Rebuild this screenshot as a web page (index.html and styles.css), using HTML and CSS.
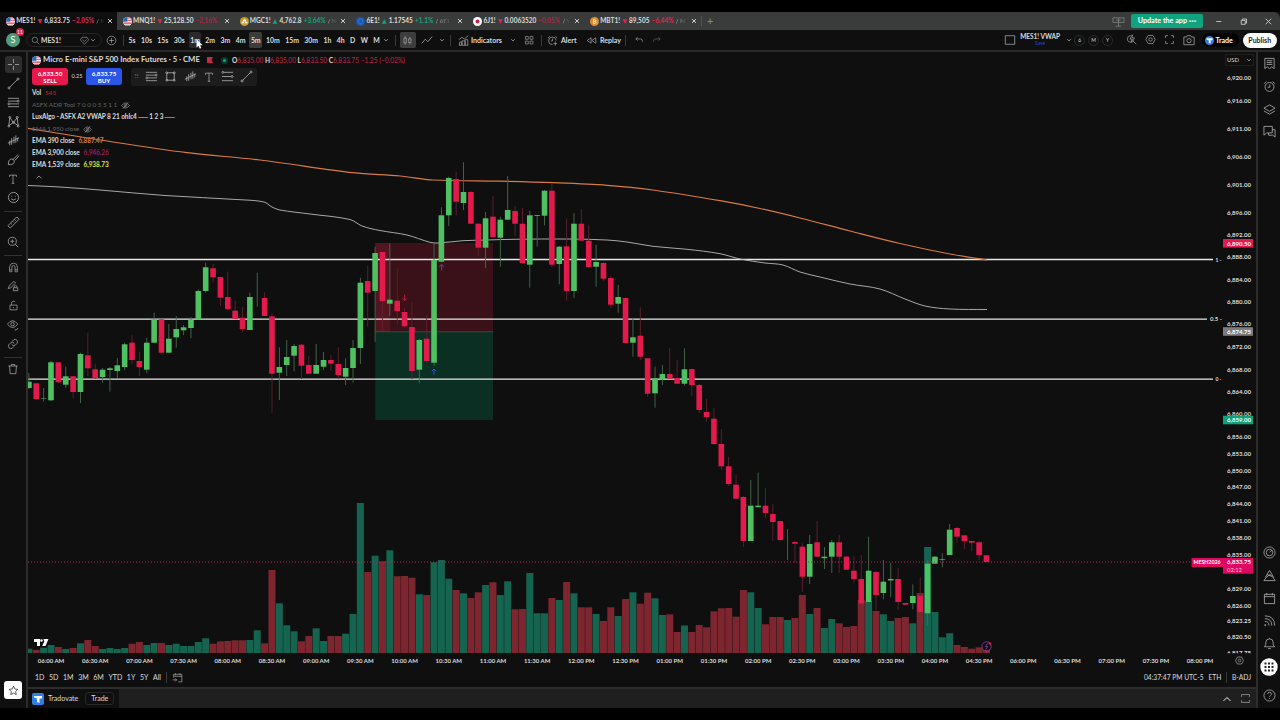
FILE: index.html
```html
<!DOCTYPE html>
<html lang="en">
<head>
  <meta charset="UTF-8">
  <meta name="viewport" content="width=device-width, initial-scale=1.0">
  <title>MES1! 6,833.75</title>
  <link rel="stylesheet" href="styles.css">
</head>
<body>
  <svg class="sprite">
    <symbol id="close" viewBox="0 0 8 8"><path d="M2 2l4 4M6 2L2 6"/></symbol>
    <symbol id="caret" viewBox="0 0 8 8"><path d="M2.2 3.2L4 4.9l1.8-1.7"/></symbol>
    <symbol id="caret-up" viewBox="0 0 8 8"><path d="M1.6 5.2L4 3l2.4 2.2"/></symbol>
    <symbol id="search" viewBox="0 0 14 14"><circle cx="6" cy="6" r="4.2"/><path d="M9 9l4 4"/></symbol>
    <symbol id="plus-circle" viewBox="0 0 14 14"><circle cx="7" cy="7" r="5.5"/><path d="M7 4v6M4 7h6"/></symbol>
    <symbol id="gem" viewBox="0 0 14 14"><path d="M3 2h8l2.500 4-6.500 7-6.500-7zM4 5.500l3 3 3-3"/></symbol>
    <symbol id="candles" viewBox="0 0 14 14"><path d="M2.5 4h3v6h-3zM4 1.5V4M4 10v2.5M8.5 5h3v4.5h-3zM10 2.5V5M10 9.5V12"/></symbol>
    <symbol id="linechart" viewBox="0 0 14 14"><path d="M1 11l4-5 3 3 5-6"/></symbol>
    <symbol id="indicators" viewBox="0 0 14 14"><path d="M1 6l4-3 3 2 5-4M2 13V9h3v4M5 13V7.5h4V13M9 13V6h3.5v7M1 13h12"/></symbol>
    <symbol id="grid" viewBox="0 0 14 14"><path d="M2 2h4v4H2zM8.500 2h4v4h-4zM2 8.500h4v4H2zM8.500 8.500h4v4h-4z"/></symbol>
    <symbol id="clock" viewBox="0 0 14 14"><circle cx="7" cy="7.5" r="4.8"/><path d="M7.3 4.800v3H5M1.200 4l2.400-2.400M12.800 4l-2.400-2.400"/></symbol>
    <symbol id="clock-plus" viewBox="0 0 14 14"><path d="M11.600 7A4.800 4.800 0 1 0 7 12.200M7 4.500v3H5M1 4l2.400-2.400M13 4l-2.400-2.400M10.500 8.500v5M8 11h5"/></symbol>
    <symbol id="replay" viewBox="0 0 14 14"><path d="M6.500 3.500v7L1.500 7zM12.500 3.500v7L7.500 7z"/></symbol>
    <symbol id="undo" viewBox="0 0 14 14"><path d="M5 3L2.500 5.500 5 8M2.500 5.500H9q3 0 3 4"/></symbol>
    <symbol id="redo" viewBox="0 0 14 14"><path d="M9 3l2.500 2.500L9 8M11.500 5.500H5q-3 0-3 4"/></symbol>
    <symbol id="square" viewBox="0 0 14 14"><path d="M1.500 2h11v10h-11z"/></symbol>
    <symbol id="rect" viewBox="0 0 14 14"><path d="M3 3h8v8H3z"/><circle cx="3" cy="3" r="1"/><circle cx="11" cy="3" r="1"/><circle cx="3" cy="11" r="1"/><circle cx="11" cy="11" r="1"/></symbol>
    <symbol id="quick" viewBox="0 0 14 14"><path d="M10 8A4.300 4.300 0 1 1 6 2M9 9l4 4M8 1L5 6.500h3L6.500 10 11 5H8z"/></symbol>
    <symbol id="hex" viewBox="0 0 14 14"><path d="M4 1.800h6L13 7l-3 5.200H4L1 7z"/><circle cx="7" cy="7" r="2.200"/></symbol>
    <symbol id="full" viewBox="0 0 14 14"><path d="M2 5V2h3M9 2h3v3M12 9v3H9M5 12H2V9"/></symbol>
    <symbol id="panel" viewBox="0 0 14 14"><path d="M2 5V2h10v3M12 9v3H2V9"/></symbol>
    <symbol id="camera" viewBox="0 0 14 14"><path d="M1 3.500h3L5 2h4l1 1.500h3v9H1z"/><circle cx="7" cy="7.700" r="2.500"/></symbol>
    <symbol id="cross" viewBox="0 0 14 14"><path d="M7 1v4.500M7 8.500V13M1 7h4.500M8.500 7H13"/></symbol>
    <symbol id="trend" viewBox="0 0 14 14"><path d="M3 11l8-8"/><circle cx="2.200" cy="11.800" r="1.100"/><circle cx="11.800" cy="2.200" r="1.100"/></symbol>
    <symbol id="fib" viewBox="0 0 14 14"><path d="M1 2.500h12M1 5.500h10M3 8.500h10M1 11.500h12"/><circle cx="12" cy="5.500" r="1"/><circle cx="2" cy="8.500" r="1"/></symbol>
    <symbol id="fib-ext" viewBox="0 0 14 14"><path d="M3 2.500h10M1 7h10M1 11.500h12"/><circle cx="2" cy="2.500" r="1"/><circle cx="12" cy="7" r="1"/></symbol>
    <symbol id="pattern" viewBox="0 0 14 14"><path d="M2 11.500L3 3l4 5 4-5 1 8.500M2 11.500L7 8l5 3.500"/><circle cx="3" cy="2.500" r="1"/><circle cx="11" cy="2.500" r="1"/><circle cx="7" cy="8" r="1"/><circle cx="2" cy="12" r="1"/><circle cx="12" cy="12" r="1"/></symbol>
    <symbol id="bars" viewBox="0 0 14 14"><path d="M3 7v5M5 4.500v7M7.500 3v7M9.500 1.500v8M11.500 4v4M1 10l12-6"/></symbol>
    <symbol id="brush" viewBox="0 0 14 14"><path d="M1.500 12.500c0-4 1-6 3.500-6 2.500 0 3.500 2 2.500 4s-3 2-6 2zM7 6.500L12 1.500M8.500 8L13 3"/></symbol>
    <symbol id="text" viewBox="0 0 14 14"><path d="M3 4.500V2.500h8v2M7 2.500v9.500M5.500 12h3"/></symbol>
    <symbol id="smile" viewBox="0 0 14 14"><circle cx="7" cy="7" r="5.500"/><path d="M4.500 8.500q2.500 2.500 5 0M5 5.200v.8M9 5.200v.8"/></symbol>
    <symbol id="ruler" viewBox="0 0 14 14"><path d="M1 10.500L10.500 1 13 3.500 3.500 13zM4 7.700l1.200 1.200M6 5.700l1.200 1.200M8 3.700l1.200 1.200"/></symbol>
    <symbol id="zoom-in" viewBox="0 0 14 14"><circle cx="6.200" cy="6.200" r="4.700"/><path d="M9.600 9.600L13 13M6.200 4v4.400M4 6.200h4.400"/></symbol>
    <symbol id="magnet" viewBox="0 0 14 14"><path d="M2 12.500V6.500a5 5 0 0 1 10 0v6H9v-6a2 2 0 0 0-4 0v6zM2 10h3M9 10h3"/></symbol>
    <symbol id="pencil-lock" viewBox="0 0 14 14"><path d="M1.500 10l1-3L8 1.500l2 2L4.500 9zM7.500 9h5v3.500h-5zM8.500 9V8a1.500 1.500 0 0 1 3 0"/></symbol>
    <symbol id="lock" viewBox="0 0 14 14"><path d="M2.500 6.500h9v6h-9zM4.500 6.500V4a2.500 2.500 0 0 1 4.500-1.500M7 9v1.500"/></symbol>
    <symbol id="eye" viewBox="0 0 14 14"><path d="M.500 6q6-8 12 0-6 8-12 0zM9 12l1.500 1.200L13 10.500"/><circle cx="6.500" cy="6" r="2"/></symbol>
    <symbol id="eye-off" viewBox="0 0 14 14"><path d="M1 7q6-8 12 0-6 8-12 0zM3 12l8-10"/><circle cx="7" cy="7" r="2"/></symbol>
    <symbol id="link" viewBox="0 0 14 14"><path d="M6 4l2-2q2-1 3.500.500T12 6L9.500 8.500Q7 10 5.500 7.500M8 10l-2 2q-2 1-3.500-.500T2 8l2.500-2.500Q7 4 8.500 6.500"/></symbol>
    <symbol id="trash" viewBox="0 0 14 14"><path d="M1.500 3.500h11M5 3.500V1.800h4v1.700M3 3.500l.700 9h6.600l.700-9"/></symbol>
    <symbol id="star" viewBox="0 0 14 14"><path d="M7 1.500l1.700 3.600 3.900.500-2.900 2.700.800 3.900L7 10.300l-3.500 1.900.800-3.900L1.400 5.600l3.900-.500z"/></symbol>
    <symbol id="watch" viewBox="0 0 14 14"><path d="M2 1.500h10v11l-2.500-2-2.500 2-2.500-2-2.500 2zM4 4h6M4 6h6M4 8h6"/></symbol>
    <symbol id="layers" viewBox="0 0 14 14"><path d="M7 2l6 3.500L7 9 1 5.500zM1 8.500L7 12l6-3.500"/></symbol>
    <symbol id="chat" viewBox="0 0 14 14"><path d="M1 1.500h9v7H4l-3 2.500zM10 5h3v8l-2.500-2H6V8.500"/></symbol>
    <symbol id="target" viewBox="0 0 14 14"><circle cx="7" cy="7" r="6"/><circle cx="7" cy="7" r="3.500"/><path d="M7 7l2.500-2.500"/></symbol>
    <symbol id="alien" viewBox="0 0 14 14"><path d="M2.500 9L7 1.500 11.500 9M1 12.500h12l-2.500-4-3-2.500-4 3zM4.500 6l5 2"/></symbol>
    <symbol id="calendar" viewBox="0 0 14 14"><path d="M1.500 2.500h11v10h-11zM1.500 5h11M4 1v2.500M10 1v2.500"/></symbol>
    <symbol id="goto" viewBox="0 0 14 14"><path d="M2 7V3h10.500v9.500H8M2 5.500h10.500M4.500 1.500V4M10 1.500V4M1 10h5M4 8l2 2-2 2"/></symbol>
    <symbol id="feed" viewBox="0 0 14 14"><path d="M2 2q10.500 0 10.500 10.500M2 5q7.500 0 7.500 7.500M2 8q4.500 0 4.500 4.500M2 11.500h1v1H2z"/></symbol>
    <symbol id="bell" viewBox="0 0 14 14"><path d="M1.500 10.500h11L11 8.500V6a4 4 0 0 0-8 0v2.500zM5.500 12.500h3M7 1v1"/></symbol>
    <symbol id="help" viewBox="0 0 14 14"><circle cx="7" cy="7" r="6"/><path d="M5 5.500q0-2 2-2t2 1.800q0 1-1 1.700t-1 1.500M7 9.800v1"/></symbol>
    <symbol id="monitor" viewBox="0 0 14 14"><path d="M1 3h12v5H1zM7 3v9M4 12h6M4.500 5.500h5"/></symbol>
    <symbol id="us" viewBox="0 0 10 10"><circle class="f-white" cx="5" cy="5" r="5"/><path class="f-red" d="M5 .5h2.200l1.500 1.300H5zM5 3h4.600l.3 1.300H5zM.300 6h9.500l-.600 1.400H.900zM2 8.600h6L6.500 9.700h-3z"/><path class="f-blue" d="M5 0v5.300H0A5 5 0 0 1 5 0z"/></symbol>
    <symbol id="gold" viewBox="0 0 10 10"><circle class="f-gold" cx="5" cy="5" r="5"/><path class="f-white" d="M3.800 2.800h2.400l.6 1.800H3.200zM2 5.200h2.300l.5 1.800H1.500zM5.700 5.200H8L8.500 7H5.200z"/></symbol>
    <symbol id="eu" viewBox="0 0 10 10"><circle class="f-eu" cx="5" cy="5" r="5"/><circle class="eu-ring" cx="5" cy="5" r="2.700"/></symbol>
    <symbol id="jp" viewBox="0 0 10 10"><circle class="f-white" cx="5" cy="5" r="5"/><circle class="f-jp" cx="5" cy="5" r="2.100"/></symbol>
    <symbol id="btc" viewBox="0 0 10 10"><circle class="f-btc" cx="5" cy="5" r="5"/><path class="btc-b" d="M4 2.800v4.400h1.500q1.200 0 1.200-1.200T5.500 4.900H4h1.300q1.100 0 1.100-1T5.300 2.800zM4.700 2v.8M4.700 7.200V8"/></symbol>
    <symbol id="tdv" viewBox="0 0 12 12"><path class="f-white" d="M2 3h8v2.500H7.500V10L5 9V5.500L2 4.500z"/></symbol>
  </svg>

  <div class="app">
    <header class="tabs">
      <div class="tab active"><svg class="flag"><use href="#us"/></svg><b>MES1!</b><i class="down">▼</i><span>6,833.75</span><span class="down">−2.05%</span><span class="rest">/ N</span><svg class="x"><use href="#close"/></svg></div>
      <div class="tab"><svg class="flag"><use href="#us"/></svg><b>MNQ1!</b><i class="down">▼</i><span>25,128.50</span><span class="down dim">−2.16%</span><span class="rest"></span><svg class="x"><use href="#close"/></svg></div>
      <div class="tab"><svg class="flag"><use href="#gold"/></svg><b>MGC1!</b><i class="up">▲</i><span>4,762.8</span><span class="up">+3.64%</span><span class="rest">/ N</span><svg class="x"><use href="#close"/></svg></div>
      <div class="tab"><svg class="flag"><use href="#eu"/></svg><b>6E1!</b><i class="up">▲</i><span>1.17545</span><span class="up">+1.1%</span><span class="rest">/ 6E1</span><svg class="x"><use href="#close"/></svg></div>
      <div class="tab"><svg class="flag"><use href="#jp"/></svg><b>6J1!</b><i class="down">▼</i><span>0.0063520</span><span class="down dim">−0.05%</span><span class="rest">/ \</span><svg class="x"><use href="#close"/></svg></div>
      <div class="tab"><svg class="flag"><use href="#btc"/></svg><b>MBT1!</b><i class="down">▼</i><span>89,505</span><span class="down">−6.44%</span><span class="rest">/ M</span><svg class="x"><use href="#close"/></svg></div>
      <div class="tab-add">+</div>
      <div class="window-side">
        <svg class="ico grey"><use href="#monitor"/></svg>
        <button class="update">Update the app <span>◦◦◦</span></button>
        <svg class="win" viewBox="0 0 8 8"><path d="M2 4h4.500"/></svg>
        <svg class="win" viewBox="0 0 8 8"><path d="M2 3h3.500v3.500H2zM3 3V1.800h3.700V5.500h-1"/></svg>
        <svg class="win" viewBox="0 0 8 8"><path d="M1.500 1.500l5 5M6.500 1.500l-5 5"/></svg>
      </div>
    </header>

    <nav class="toolbar">
      <div class="avatar">S<span class="badge">11</span></div>
      <div class="symbol-search"><svg class="ico s9"><use href="#search"/></svg><b>MES1!</b><svg class="ico s9 gem"><use href="#gem"/></svg><svg class="caret"><use href="#caret"/></svg></div>
      <svg class="ico s11 add"><use href="#plus-circle"/></svg>
      <span class="sep"></span>
      <div class="intervals">
        <span>5s</span><span>10s</span><span>15s</span><span>30s</span><span class="hover">1m</span><span>2m</span><span>3m</span><span>4m</span><span class="on">5m</span><span>10m</span><span>15m</span><span>30m</span><span>1h</span><span>4h</span><span>D</span><span>W</span><span>M</span>
      </div>
      <svg class="caret"><use href="#caret"/></svg>
      <span class="sep"></span>
      <div class="style-btn"><svg class="ico s11"><use href="#candles"/></svg></div>
      <svg class="ico s12 line-ico"><use href="#linechart"/></svg>
      <svg class="caret"><use href="#caret"/></svg>
      <span class="sep"></span>
      <svg class="ico s11 ind-ico"><use href="#indicators"/></svg><b class="ind">Indicators</b>
      <svg class="caret"><use href="#caret"/></svg>
      <svg class="ico s10 grid-ico"><use href="#grid"/></svg>
      <span class="sep"></span>
      <svg class="ico s11 alert-ico"><use href="#clock-plus"/></svg><b class="alert">Alert</b>
      <svg class="ico s11"><use href="#replay"/></svg><b class="replay">Replay</b>
      <span class="sep"></span>
      <svg class="ico s10 undo"><use href="#undo"/></svg>
      <svg class="ico s10 redo"><use href="#redo"/></svg>
      <div class="tools-right">
        <svg class="ico s12"><use href="#square"/></svg>
        <div class="layout"><b>MES1! VWAP</b><small>Save</small></div>
        <svg class="caret"><use href="#caret"/></svg>
        <div class="rounds"><span>6</span><span>M</span><span>Y</span></div>
        <div class="acts"><svg class="ico s11"><use href="#quick"/></svg><svg class="ico s11"><use href="#hex"/></svg><svg class="ico s11"><use href="#full"/></svg><svg class="ico s12"><use href="#camera"/></svg></div>
        <div class="trade-pill"><svg class="tdv"><use href="#tdv"/></svg><b>Trade</b></div>
        <button class="publish">Publish</button>
      </div>
    </nav>

    <div class="main">
      <aside class="left-rail">
        <span class="sel"><svg class="ico"><use href="#cross"/></svg></span>
        <span><svg class="ico"><use href="#trend"/></svg></span>
        <span><svg class="ico"><use href="#fib"/></svg></span>
        <span><svg class="ico"><use href="#pattern"/></svg></span>
        <span><svg class="ico"><use href="#bars"/></svg></span>
        <span><svg class="ico"><use href="#brush"/></svg></span>
        <span><svg class="ico s12"><use href="#text"/></svg></span>
        <span><svg class="ico"><use href="#smile"/></svg></span>
        <hr>
        <span><svg class="ico"><use href="#ruler"/></svg></span>
        <span><svg class="ico s12"><use href="#zoom-in"/></svg></span>
        <hr>
        <span><svg class="ico s11"><use href="#magnet"/></svg></span>
        <span><svg class="ico s12"><use href="#pencil-lock"/></svg></span>
        <span><svg class="ico s11"><use href="#lock"/></svg></span>
        <span><svg class="ico s12"><use href="#eye"/></svg></span>
        <span><svg class="ico s12"><use href="#link"/></svg></span>
        <hr>
        <span><svg class="ico s12"><use href="#trash"/></svg></span>
        <div class="fav"><svg class="ico"><use href="#star"/></svg></div>
      </aside>

      <section class="center">
        <div class="pane">
          <svg class="chart" id="chart" viewBox="28 52 1228 616"></svg>
          <div class="legend">
            <div class="title-row">
              <svg class="flag"><use href="#us"/></svg>
              <b class="title">Micro E-mini S&amp;P 500 Index Futures · 5 · CME</b>
              <i class="mark"></i><i class="live"></i>
              <span class="ohlc">O<em>6,835.00</em> H<em>6,835.00</em> L<em>6,833.50</em> C<em>6,833.75</em> <em>−1.25 (−0.02%)</em></span>
            </div>
            <div class="orders">
              <div class="sell">6,833.50<br>SELL</div><span>0.25</span><div class="buy">6,833.75<br>BUY</div>
              <div class="drawbar">
                <i class="grip">⠿</i>
                <svg class="ico"><use href="#fib"/></svg><svg class="ico"><use href="#rect"/></svg><svg class="ico"><use href="#bars"/></svg><svg class="ico s12"><use href="#text"/></svg><svg class="ico"><use href="#fib-ext"/></svg><svg class="ico"><use href="#trend"/></svg>
              </div>
            </div>
            <div class="study">Vol <span class="vol">545</span></div>
            <div class="study off">ASFX ADR Tool 7 0 0 0 5 5 1 1 <svg class="ico s9"><use href="#eye-off"/></svg></div>
            <div class="study">LuxAlgo - ASFX A2 VWAP 8 21 ohlc4 ── 1 2 3 ──</div>
            <div class="study off">EMA 1,950 close <svg class="ico s9"><use href="#eye-off"/></svg></div>
            <div class="study">EMA 390 close <span class="c-orange">6,887.47</span></div>
            <div class="study">EMA 3,900 close <span class="c-purple">6,946.26</span></div>
            <div class="study">EMA 1,539 close <span class="c-yellow">6,938.73</span></div>
            <svg class="caret collapse"><use href="#caret-up"/></svg>
          </div>
          <div class="currency">USD<svg class="caret"><use href="#caret"/></svg></div>
        </div>
        <div class="ranges">
          <div class="range-list"><span>1D</span><span>5D</span><span>1M</span><span>3M</span><span>6M</span><span>YTD</span><span>1Y</span><span>5Y</span><span>All</span></div>
          <i class="sep"></i>
          <svg class="ico s11"><use href="#goto"/></svg>
          <div class="session"><span>04:37:47 PM UTC-5</span><span>ETH</span><i class="sep"></i><span>B-ADJ</span></div>
        </div>
        <footer class="broker">
          <div class="broker-tab"><svg class="tdv square"><use href="#tdv"/></svg><span>Tradovate</span><span class="chip">Trade</span></div>
          <svg class="ico s12 end"><use href="#caret-up"/></svg>
          <svg class="ico s11"><use href="#panel"/></svg>
        </footer>
      </section>

      <aside class="right-rail">
        <svg class="ico"><use href="#watch"/></svg>
        <svg class="ico"><use href="#clock"/></svg>
        <svg class="ico"><use href="#layers"/></svg>
        <svg class="ico"><use href="#chat"/></svg>
        <svg class="ico low"><use href="#target"/></svg>
        <svg class="ico"><use href="#alien"/></svg>
        <svg class="ico"><use href="#calendar"/></svg>
        <svg class="ico"><use href="#feed"/></svg>
        <svg class="ico"><use href="#bell"/></svg>
        <svg class="apps" viewBox="0 0 18 18"><circle cx="9" cy="9" r="8.700"/><path d="M4.500 4.500h2v2h-2zM8 4.500h2v2H8zM11.500 4.500h2v2h-2zM4.500 8h2v2h-2zM8 8h2v2H8zM11.500 8h2v2h-2zM4.500 11.500h2v2h-2zM8 11.500h2v2H8zM11.500 11.500h2v2h-2z"/></svg>
        <svg class="ico help"><use href="#help"/></svg>
      </aside>
    </div>
    <svg class="pointer" viewBox="0 0 8 11"><path d="M.500.500v8l2-1.700 1.300 3 1.500-.700-1.300-2.800h2.700z"/></svg>
  </div>
  <script src="chart.js"></script>
</body>
</html>
```
FILE: styles.css
```css
* {
  box-sizing: border-box;
}
body {
  margin: 0;
  width: 1280px;
  height: 720px;
  overflow: hidden;
  background: #000;
  color: #dcdcdc;
  font-family: Lato, "Open Sans", sans-serif;
  font-size: 7px;
  line-height: 1;
}
b {
  font-weight: 700;
}
i, em {
  font-style: normal;
}
button {
  border: none;
  padding: 0;
  font: inherit;
  font-weight: 700;
}
.sprite {
  display: none;
}
.app {
  position: relative;
  display: flex;
  flex-direction: column;
  height: 696px;
  margin: 12px 0;
  background: #0f0f0f;
}

/* icons */
svg {
  flex: none;
}
.ico {
  width: 13px;
  height: 13px;
  fill: none;
  stroke: #a9a9a9;
  stroke-width: 0.900;
}
.s9 { width: 9px; height: 9px; }
.s10 { width: 10px; height: 10px; }
.s11 { width: 11px; height: 11px; }
.s12 { width: 12px; height: 12px; }
.caret {
  width: 8px;
  height: 8px;
  fill: none;
  stroke: #aaa;
  stroke-width: 0.8;
}
.flag {
  width: 9px;
  height: 9px;
}
.f-white { fill: #fff; }
.f-red { fill: #e0384b; }
.f-blue { fill: #2468b8; }
.f-gold { fill: #c99a2e; }
.f-eu { fill: #1559b5; }
.f-jp { fill: #c81e45; }
.f-btc { fill: #e08a2c; }
.eu-ring { fill: none; stroke: #8fb6d8; stroke-width: 0.8; stroke-dasharray: 0.8 1.3; }
.btc-b { fill: none; stroke: #fff; stroke-width: 0.8; }
.sep {
  width: 1px;
  height: 11px;
  background: #3a3a3a;
}
.down { color: #e2234f; }
.up { color: #15a27c; }
.dim { opacity: 0.65; }

/* tab strip */
.tabs {
  display: flex;
  align-items: center;
  height: 18px;
  background: #3a3c3b;
  border-radius: 0 6px 0 0;
}
.tab {
  display: flex;
  align-items: center;
  width: 116.800px;
  height: 18px;
  padding: 0 3px 0 6px;
  gap: 2.200px;
  white-space: nowrap;
  font-size: 6.500px;
  font-weight: 700;
}
.tab.active {
  background: #0f0f0f;
}
.tab .flag {
  margin-right: -1px;
}
.tab i {
  font-size: 6px;
  font-family: "DejaVu Sans", sans-serif;
}
.tab .rest {
  flex: 1;
  width: 0;
  overflow: hidden;
  color: #999;
  font-size: 6px;
  -webkit-mask-image: linear-gradient(90deg, #000, transparent);
}
.tab .x {
  width: 8px;
  height: 8px;
  stroke: #ddd;
  stroke-width: 0.9;
}
.tab-add {
  width: 18px;
  text-align: center;
  font-size: 11px;
  color: #888;
  border-left: 1px solid #555;
  line-height: 10px;
}
.window-side {
  display: flex;
  align-items: center;
  margin-left: auto;
  padding-right: 7px;
}
.window-side .grey {
  stroke: #7d7d7d;
  margin-right: 6px;
}
.update {
  width: 72px;
  height: 14px;
  margin-right: 11px;
  border-radius: 2px;
  background: #11a37f;
  color: #fff;
  font-size: 7.200px;
}
.update span {
  font-size: 6px;
}
.win {
  width: 9px;
  height: 9px;
  margin-right: 16px;
  fill: none;
  stroke: #ccc;
  stroke-width: 0.8;
}
.win:last-child {
  margin-right: 0;
}

/* toolbar */
.toolbar {
  display: flex;
  align-items: center;
  height: 20px;
  padding-left: 6px;
  font-size: 7px;
}
.avatar {
  position: relative;
  width: 14px;
  height: 14px;
  border-radius: 50%;
  background: #4f9c7b;
  color: #fff;
  font-size: 9px;
  line-height: 14px;
  text-align: center;
}
.badge {
  position: absolute;
  left: 10px;
  top: -5px;
  width: 8px;
  height: 8px;
  border-radius: 50%;
  background: #d5264b;
  font-size: 5px;
  line-height: 8px;
}
.symbol-search {
  display: flex;
  align-items: center;
  width: 76px;
  height: 14px;
  margin: 0 4px 0 6px;
  padding: 0 4px;
  border: 1px solid #262626;
  border-radius: 7px;
}
.symbol-search b {
  margin: 0 auto 0 1px;
  font-size: 6.800px;
}
.add {
  margin-right: 6px;
}
.intervals {
  display: flex;
  justify-content: space-between;
  align-items: center;
  width: 251.500px;
  margin: 0 2px 0 4.500px;
  font-size: 6.900px;
  font-weight: 700;
}
.intervals .hover, .intervals .on {
  padding: 4.500px 1.500px;
  margin: 0 -1.500px;
  border-radius: 2px;
  background: #2a2a2a;
}
.intervals .on {
  background: #3b3b3b;
}
.style-btn {
  display: grid;
  place-items: center;
  width: 16px;
  height: 16px;
  margin-left: 4px;
  margin-right: 5px;
  border-radius: 2px;
  background: #3d3d3d;
}
.intervals + .caret { margin-right: 4.500px; }
.line-ico { margin-right: 5px; }
.line-ico + .caret { margin-right: 4px; }
.ind-ico { margin-left: 7px; }
.ind { width: 38px; margin-left: 2.500px; }
.grid-ico { margin: 0 7px 0 7px; }
.alert-ico { margin: 0 3px 0 5px; }
.alert { width: 25px; }
.replay { width: 25px; margin-left: 3px; }
.undo { margin: 0 8px 0 8px; }
.redo { opacity: 0.6; }
.tools-right {
  display: flex;
  align-items: center;
  margin-left: auto;
  padding-right: 3px;
}
.layout {
  display: flex;
  flex-direction: column;
  align-items: center;
  width: 41px;
  margin: 0 4px 0 4px;
  font-size: 6.500px;
  white-space: nowrap;
}
.layout small {
  font-size: 5px;
  color: #2b47d6;
}
.rounds {
  display: flex;
  gap: 3px;
  margin: 0 13px 0 1.500px;
}
.rounds span {
  width: 11px;
  height: 11px;
  border: 1px solid #2c2c2c;
  border-radius: 50%;
  font-size: 5px;
  line-height: 9px;
  text-align: center;
}
.acts {
  display: flex;
  gap: 7.800px;
  margin-right: 7px;
}
.trade-pill {
  display: flex;
  align-items: center;
  gap: 2px;
  width: 37px;
  height: 14px;
  margin-right: 4px;
  padding-left: 3px;
  border-radius: 7px;
  background: #000;
  color: #fff;
}
.tdv {
  width: 9px;
  height: 9px;
  border-radius: 50%;
  background: #2f7fe6;
}
.tdv.square {
  width: 12px;
  height: 12px;
  border-radius: 2px;
}
.publish {
  width: 34.500px;
  height: 15px;
  border-radius: 8px;
  background: #fff;
  color: #222;
}

/* body */
.main {
  display: flex;
  flex: 1;
  border-top: 2px solid #2b2b2b;
}
.left-rail {
  display: flex;
  flex-direction: column;
  align-items: center;
  width: 28px;
  padding-top: 3.500px;
  border-right: 2px solid #2d2d2d;
}
.left-rail span {
  display: grid;
  place-items: center;
  width: 17px;
  height: 17px;
  margin-bottom: 2.100px;
}
.left-rail .sel {
  border-radius: 3px;
  background: #2e2e2e;
}
.left-rail hr {
  width: 18px;
  height: 1px;
  margin: 2.500px 0 2.700px;
  border: none;
  background: #333;
}
.fav {
  display: grid;
  place-items: center;
  width: 18px;
  height: 18px;
  margin: auto 0 9px;
  border-radius: 3px;
  background: #fff;
}
.fav .ico {
  width: 11px;
  height: 11px;
  stroke: #222;
}
.center {
  display: flex;
  flex-direction: column;
  width: 1228px;
}
.pane {
  position: relative;
  height: 616px;
}
.chart {
  display: block;
  width: 1228px;
  height: 616px;
}
.legend {
  position: absolute;
  left: 4px;
  top: 3px;
}
.title-row {
  display: flex;
  align-items: center;
  height: 10px;
  margin-bottom: 3px;
  white-space: nowrap;
}
.title {
  width: 164px;
  margin-left: 2px;
  font-size: 7.700px;
}
.mark {
  width: 6px;
  height: 6px;
  background: #c9284c;
  clip-path: polygon(0 0, 100% 0, 75% 50%, 100% 100%, 0 100%);
}
.live {
  width: 7px;
  height: 7px;
  margin: 0 4px 0 8px;
  border: 2px solid #0a3d2e;
  border-radius: 50%;
  background: #16a67e;
}
.ohlc {
  font-size: 6.600px;
  font-weight: 700;
}
.ohlc em {
  color: #c42546;
  font-weight: 400;
}
.orders {
  display: flex;
  align-items: center;
  height: 17px;
  margin-bottom: 2px;
  font-size: 6px;
}
.sell, .buy {
  width: 36px;
  height: 17px;
  padding-top: 1.500px;
  border-radius: 3px;
  color: #fff;
  font-weight: 700;
  font-size: 6.200px;
  line-height: 7px;
  text-align: center;
}
.sell { background: #e5194b; }
.buy { background: #2a56e8; }
.orders > span {
  width: 18px;
  text-align: center;
  font-size: 5.500px;
}
.drawbar {
  display: flex;
  align-items: center;
  gap: 6.200px;
  width: 126px;
  height: 18px;
  margin-left: 9px;
  padding-left: 3px;
  border-radius: 3px;
  background: #1c1c1c;
}
.grip {
  width: 5px;
  color: #555;
  font-size: 7px;
}
.study {
  display: flex;
  align-items: center;
  gap: 4px;
  height: 12px;
  font-size: 6.500px;
  letter-spacing: -0.080px;
  font-weight: 700;
  white-space: nowrap;
}
.study.off {
  color: #626262;
  font-weight: 400;
}
.vol { color: #b02d45; font-weight: 400; }
.c-orange { color: #d9773c; }
.c-purple { color: #9a1c5a; }
.c-yellow { color: #d8e04a; }
.collapse {
  display: block;
  margin: 2px 0 0 3px;
}
.currency {
  position: absolute;
  right: 2px;
  top: 2px;
  display: flex;
  align-items: center;
  justify-content: space-between;
  width: 29px;
  height: 12px;
  padding-left: 1px;
  border: 1px solid #1e1e1e;
  font-size: 5.800px;
}
.ranges {
  display: flex;
  align-items: center;
  height: 19px;
  padding: 0 5px 0 7px;
  font-weight: 400;
}
.range-list {
  display: flex;
  justify-content: space-between;
  width: 126px;
  margin-right: 5px;
}
.ranges > .ico {
  margin-left: 5px;
}
.session {
  display: flex;
  align-items: center;
  gap: 4.800px;
  margin-left: auto;
  font-size: 6.700px;
}
.broker {
  display: flex;
  align-items: center;
  flex: 1;
  padding-right: 5px;
  border-top: 2px solid #2d2d2d;
  background: #1f1f1f;
}
.broker-tab {
  display: flex;
  align-items: center;
  gap: 4px;
  width: 91px;
  height: 100%;
  padding-left: 4px;
  background: #0f0f0f;
}
.chip {
  width: 29px;
  margin-left: 3px;
  border: 1px solid #262626;
  border-radius: 3px;
  line-height: 11px;
  text-align: center;
}
.broker .end {
  margin: 0 7px 0 auto;
  stroke-width: 0.700;
}
.right-rail {
  display: flex;
  flex-direction: column;
  align-items: center;
  width: 24px;
  padding-top: 5px;
  border-left: 2px solid #2d2d2d;
}
.right-rail .ico {
  margin-bottom: 9.800px;
}
.right-rail .low {
  margin-top: auto;
}
.right-rail .apps {
  width: 18px;
  height: 18px;
  margin-top: -2px;
  fill: #fff;
}
.apps path { fill: #222; }
.right-rail .help {
  margin: 13px 0 6px;
}
.pointer {
  position: absolute;
  left: 196px;
  top: 27px;
  width: 8px;
  height: 11px;
  fill: #fff;
}

/* chart drawing */
.candle.g { fill: #4fc163; }
.candle.r { fill: #e21b4c; }
.wick.g { fill: #466b4c; }
.wick.r { fill: #64202f; }
.vol-bar.g { fill: #156450; }
.vol-bar.r { fill: #7d2630; }
.zone-risk { fill: #3a1118; }
.zone-risk.past { fill: #53151f; }
.zone-gain { fill: #0c2f23; }
.zone-edge { fill: #6b6b6b; opacity: 0.6; }
.ema { fill: none; stroke: #d97a45; stroke-width: 1.200; }
.vwap { fill: none; stroke: #b8b8b8; stroke-width: 0.900; }
.level { stroke: #e8e8e8; stroke-width: 1.300; }
.last-line { stroke: #c02858; stroke-width: 1.200; stroke-dasharray: 1 2; }
.axis {
  fill: #dedede;
  font-size: 6.400px;
  font-weight: 700;
}
.axis.mid { text-anchor: middle; }
.tag { fill: #fff; font-size: 6.400px; font-weight: 700; }
.t-red { fill: #e5194b; }
.t-grey { fill: #7c7c7c; }
.t-green { fill: #12a078; }
.t-pink { fill: #de0860; }
.countdown { fill: #ffc2da; font-size: 6px; }
.buy-arrow, .sell-arrow, .bolt { fill: none; stroke: #2f5bea; stroke-width: 0.900; }
.sell-arrow { stroke: #c42745; }
.bolt { stroke: #7d3a9a; }
.axis-gear { fill: none; stroke: #aaa; stroke-width: 0.700; }
.logo { fill: #fff; }
.under { fill: #0f0f0f; }
```
FILE: chart.js
```js
const svg = document.getElementById('chart');
const NS = 'http://www.w3.org/2000/svg';
const STEP = 7.366;
const BASE = 653;

// colour, body top, body bottom, high, low, volume top
const bars = [
  ['g',381.7,388,373,389,648.7],['r',383.3,399,383,399,650],['g',398.5,399,388,401.5,647.7],
  ['g',362.3,400.3,360.7,401.3,645],['r',362.3,382.3,362,383,647],['g',376.3,384.7,366.7,388,649],
  ['r',376.3,392,376,398,648],['g',354,392,352.7,403,643.3],['r',355.3,368.3,332.7,376,640],
  ['r',369.3,378.3,364,379,646],['g',369.7,377,368,382.7,649],['g',368.3,370,367,391.7,648],
  ['g',365.3,371,358,378,649],['g',344.3,367,342.7,370,648],['r',342.7,360,335,364,643.7],
  ['r',361,367,351.7,376,642],['g',342.7,369.7,337.7,373,645],['g',319.3,342.7,312.7,343.3,643],
  ['r',319.3,352.7,319,353,643],['g',338.7,352.7,324,353,645],['g',329,337.3,316,347.7,643.7],
  ['g',327.3,330.3,325,335,646],['g',319.7,328,317,338.3,646],['g',291,319.3,289.3,319.3,642],
  ['g',267.3,291,262.7,292.7,638.3],['r',268.3,277.3,264,282.7,643.7],['r',277,297.7,277,306,641.3],
  ['r',297,309,271.7,310,641],['r',310.7,319,300.7,319,640.3],['r',317.7,329,307,332,640.3],
  ['g',297,330,292.7,330,640],['g',290,290,272.7,306.7,630.3],['r',298,316,292.3,316,643.3],
  ['r',316.3,373.7,313.3,412.7,570],['g',367,372.7,347.3,400,603.3],['g',357,365,340,376,625.3],
  ['g',346,355.7,344,371.3,631.3],['r',344.7,365.7,344,379,641.3],['r',365,373.7,356,374,636],
  ['g',365,373.7,344,374,628.3],['g',360,366.7,352,370,641],['r',360,363.7,355,370.7,636],
  ['r',364,375,347.3,378.7,636],['g',368,376.7,358.3,385,633.7],['g',348,368,340,382.7,614],
  ['g',282.7,348,277.7,364,503],['r',281,292.7,265.7,326.7,572],['g',253,291,246.7,341.7,555.7],
  ['r',252,301,252,330,561.3],['g',299.7,303.7,243.3,316,550.3],['r',300.7,311,268.3,324.3,576.3],
  ['r',312,326.3,308,327,576],['r',327,371,302.3,379.3,577.7],['g',340,369.7,339,383.3,594.3],
  ['r',338.7,361,315,362,595],['g',260,362.7,243.3,366,562.3],['g',215.3,261.7,207.3,262,560],
  ['g',178,215.3,176.7,226,578.7],['r',179,201.7,171.7,215.3,590],['g',192,203,162.3,210,593.3],
  ['r',192,223.7,191,224,598],['r',223.7,247.7,223,256,592.3],['g',218.3,247.7,212,268,585],
  ['r',216.7,237,196,238,582.3],['g',219.7,237.7,216.7,266.7,595],['g',210,219.7,176,220,581.3],
  ['r',211,223.7,206,235.7,609.3],['r',223.7,263,207.7,264,609],['g',215.3,264.7,210.7,287.7,573],
  ['g',215,215.8,215,246.7,613.3],['g',190.7,215.7,190,225.3,613.3],['r',190.7,264.7,183.3,267,598],
  ['g',246.7,264,246,284.3,600],['r',246.3,291,218.3,300.7,582],['g',223.7,291,213.3,298,593.3],
  ['r',223.7,240.7,209.3,241,607.3],['r',240.7,267,225.3,267,607.3],['g',262,266.7,244.7,286.7,614],
  ['r',263,278.7,262,281,621],['r',278,304.7,276,308,607.3],['g',297,303.7,285,312.7,616],
  ['r',298,343,298,343,599],['g',337.3,342.7,317.7,356.7,592.3],['r',335.7,356.7,307.3,360,603.7],
  ['r',358.3,393.7,358,397,592.7],['g',378.3,393.3,366.7,407.7,598.3],['g',374,379,365,385,615],
  ['r',374,378.7,348,379,614.3],['r',378,383.7,360,384,632],['g',369.3,383.7,348.3,385.7,625.5],
  ['r',369,385,369,396,632],['r',385,410,384,413,625],['r',412,417,399,421.7,627.3],
  ['r',418.7,444,408,445,611.3],['r',444,466.3,429.3,470,608.3],['r',466.3,484,456.7,486,608],
  ['r',484.7,498.7,475,499,616.7],['r',497,541,496,546.7,590],['g',505.7,541,480,541,592.3],
  ['g',505.7,507.2,472.7,507,608],['r',505.7,513,488.3,518,624.3],['r',514,522,504,541,617],
  ['r',521,540,521,540,617],['g',540,540,529,560,620],['r',542,543.7,541,563,618],
  ['r',546.7,576.7,543.3,591.7,595],['g',544,576.7,535,584,614],['r',542.3,556.7,521,557,608],
  ['g',556.7,558.2,547,569,628],['g',542.3,556.7,540,573,619],['r',542.3,556.7,535,573,623.3],
  ['r',556.7,569.7,556,570,627],['r',570.7,579,556,582.7,626],['r',579,603.3,555,603,600],
  ['g',570.7,602,536.7,602,601],['r',572,595,571,610.7,611],['g',581.7,593,560,599.3,614.3],
  ['g',579,580.4,562.7,597.3,621],['r',579,602,568.3,610,618],['r',603,604.7,603,605,617],
  ['g',596,603,584.3,609.3,623.3],['r',596,612,577.3,612,593],['g',563.7,613.3,560,625,547],
  ['g',556.7,563.7,556,564,612],['g',559,559.7,553.3,567.3,637.3],['g',529.7,555,524,555,633.3],
  ['r',528,536.7,527,543,645],['r',535.3,541,535,549.3,647],['r',541,542.7,541,551,648.7],
  ['r',542.3,555,541,560,647.3],['r',555.3,562,555,562,650]
];

const vwap = [[28,185.5],[60,187],[100,190],[165,195.5],[240,199.7],[264,202],[272,207],[280,210],[310,214],
  [350,219.500],[362,226],[380,230.500],[407,235],[430,242.300],[438,243],[463,240.700],[487,240],[513,239.300],
  [570,239],[607,240],[627,242],[653,246.300],[687,249.300],[720,253.700],[740,259],[765,263],[783,265],
  [800,272],[820,277],[850,284],[880,289],[905,299],[925,306],[950,309],[987,309.500]];

const ema = [[28,128.300],[100,140],[187,152.700],[260,160],[353,172.700],[400,176],[433,180],[500,181.200],
  [553,182.700],[607,185.300],[653,190],[720,200.700],[760,208.500],[800,218],[850,231],[900,243.500],[950,254],[987,260]];

const prices = [
  ['6,920.00',78],['6,916.00',100.5],['6,911.00',128.5],['6,906.00',156.5],['6,901.00',184.3],
  ['6,896.00',212.3],['6,892.00',234.5],['6,888.00',257],['6,884.00',279.3],['6,880.00',302],
  ['6,876.00',324],['6,872.00',346.5],['6,868.00',369.3],['6,864.00',391.5],['6,860.00',414],
  ['6,856.00',436.5],['6,853.00',453.3],['6,850.00',470.3],['6,847.00',487],['6,844.00',504],
  ['6,841.00',520.7],['6,838.00',537.8],['6,835.00',554.5],['6,829.00',588.5],['6,826.00',605.5],
  ['6,823.25',621],['6,820.50',636.3],['6,817.75',652.5]
];

const times = ['06:00 AM','06:30 AM','07:00 AM','07:30 AM','08:00 AM','08:30 AM','09:00 AM','09:30 AM',
  '10:00 AM','10:30 AM','11:00 AM','11:30 AM','12:00 PM','12:30 PM','01:00 PM','01:30 PM','02:00 PM',
  '02:30 PM','03:00 PM','03:30 PM','04:00 PM','04:30 PM','06:00 PM','06:30 PM','07:00 PM','07:30 PM','08:00 PM'];

function add(tag, cls, attrs, text) {
  const el = document.createElementNS(NS, tag);
  el.setAttribute('class', cls);
  for (const key in attrs) el.setAttribute(key, attrs[key]);
  if (text) el.textContent = text;
  svg.appendChild(el);
}

function rect(cls, x, y, w, h) {
  add('rect', cls, { x: x, y: y, width: w, height: h });
}

function label(cls, x, y, text, len) {
  add('text', cls, { x: x, y: y + 2.2, textLength: len, lengthAdjust: 'spacingAndGlyphs' }, text);
}

// smooth line through the points
function curve(cls, pts) {
  let d = `M${pts[0]}`;
  for (let i = 0; i < pts.length - 1; i++) {
    const a = pts[i - 1] || pts[i], b = pts[i], c = pts[i + 1], e = pts[i + 2] || c;
    const k = (c[0] - b[0]) / 3;
    const s1 = (c[1] - a[1]) / (c[0] - a[0]);
    const s2 = (e[1] - b[1]) / (e[0] - b[0]);
    d += `C${b[0] + k} ${b[1] + k * s1} ${c[0] - k} ${c[1] - k * s2} ${c[0]} ${c[1]}`;
  }
  add('path', cls, { d: d });
}

// short position box
rect('zone-risk', 375.3, 243, 117.7, 89);
rect('zone-risk past', 375.3, 243, 15, 89);
rect('zone-gain', 375.3, 332, 117.7, 88);
rect('zone-edge', 375.3, 331.4, 117.7, 0.8);

bars.forEach((b, i) => {
  const x = 51 + (i - 3) * STEP;
  const left = Math.max(28, x - 3.5);
  rect('vol-bar ' + b[0], left, b[5], x + 3.5 - left, BASE - b[5]);
});

[[259.5, 1213], [319.2, 1207], [379.2, 1213]].forEach(l => {
  add('path', 'level', { d: `M28 ${l[0]}H${l[1]}` });
});
label('axis', 1215.5, 259.5, '1 -', 6);
label('axis', 1210, 319.2, '0.5 -', 12);
label('axis', 1215.5, 379.2, '0 -', 6);

curve('vwap', vwap);
curve('ema', ema);

bars.forEach((b, i) => {
  const x = 51 + (i - 3) * STEP;
  rect('wick ' + b[0], x - 0.45, b[3], 0.9, b[4] - b[3]);
  const left = Math.max(28, x - 2.8);
  rect('candle ' + b[0], left, b[1], x + 2.8 - left, b[2] - b[1]);
});

add('path', 'last-line', { d: 'M28 562H1191' });
[[434, 369], [441.7, 264.5]].forEach(p => {
  add('path', 'buy-arrow', { d: `M${p[0]} ${p[1] + 6}v-6m-2.200 2.200l2.200-2.200 2.200 2.200` });
});
add('path', 'sell-arrow', { d: 'M404.700 294.500v6m-2.200-2.200l2.200 2.200 2.200-2.200' });

add('circle', 'bolt', { cx: 986.5, cy: 646.5, r: 4.7 });
add('path', 'bolt', { d: 'M987.500 643.500l-2 3h2.200l-2 3' });
add('circle', 't-red', { cx: 990, cy: 643.5, r: 1.3 });
add('path', 'logo', { d: 'M34 639h6v7h-3v-4h-3zM43.500 639h5l-3 7h-3.300l2-4.500zM41.500 639.200a1.300 1.300 0 1 1 0 2.600 1.300 1.300 0 0 1 0-2.600z' });

prices.forEach(p => label('axis', 1227, p[1], p[0], 24));
rect('under', 28, 653.3, 1228, 15);
times.forEach((t, i) => label('axis mid', 51 + i * 6 * STEP, 660.5, t, 26.5));

[['t-red', 243.3, '6,890.50'], ['t-grey', 331.5, '6,874.75'], ['t-green', 420, '6,859.00']].forEach(t => {
  rect(t[0], 1223, t[1] - 4.3, 30, 8.6);
  label('tag', 1227, t[1], t[2], 24);
});
rect('t-pink', 1191.500, 558, 32, 9);
rect('t-pink', 1223, 558, 30, 15.700);
label('tag', 1193.5, 562, 'MESH2026', 27);
label('tag', 1227, 562, '6,833.75', 24);
label('countdown', 1227, 569.5, '02:12', 15);

add('path', 'axis-gear', { d: 'M1237.500 657h4l2 3.500-2 3.500h-4l-2-3.500z' });
add('circle', 'axis-gear', { cx: 1239.5, cy: 660.5, r: 1.3 });
```
